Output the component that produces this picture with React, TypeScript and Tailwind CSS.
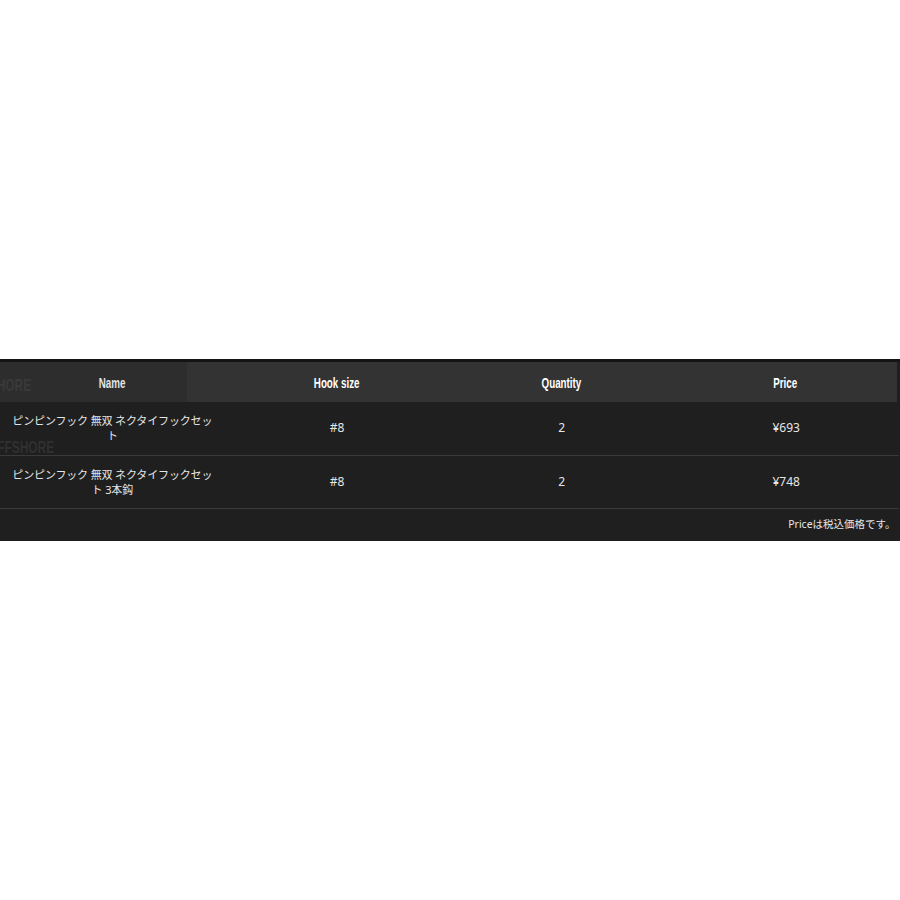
import React from "react";

const rows = [
  { name: "ピンピンフック 無双 ネクタイフックセット", hook: "#8", qty: "2", price: "¥693" },
  { name: "ピンピンフック 無双 ネクタイフックセット 3本鈎", hook: "#8", qty: "2", price: "¥748" },
];

const head = { fontFamily: '"Liberation Sans", Arial, sans-serif' };
const body = { fontFamily: '"Noto Sans", "Noto Sans CJK JP", sans-serif' };

// condensed header label (Oswald-like look)
const Label = ({ children }: { children: React.ReactNode }) => (
  <span className="inline-block scale-x-[0.7] text-[14px] font-bold" style={head}>
    {children}
  </span>
);

export default function App() {
  return (
    <div className="w-[900px] h-[900px] bg-white">
      <div className="h-[359px]" />
      <div className="relative w-full bg-[#1f1f1f] border-t-[3px] border-[#141414] overflow-hidden">
        <table className="w-full table-fixed border-collapse" style={body}>
          <thead>
            <tr className="h-[40px] text-white">
              <th className="w-1/4 bg-[#333333] font-bold">
                <Label>Name</Label>
              </th>
              <th className="w-1/4 bg-[#333333]">
                <Label>Hook size</Label>
              </th>
              <th className="w-1/4 bg-[#333333]">
                <Label>Quantity</Label>
              </th>
              <th className="w-1/4 bg-[#333333] border-r-[3px] border-[#1f1f1f]">
                <Label>Price</Label>
              </th>
            </tr>
          </thead>
          <tbody className="text-[12px] text-[#e6e6e6]">
            {rows.map((r) => (
              <tr key={r.price} className="h-[53px] border-b border-[#3a3a3a]">
                <td className="px-[10px] text-center text-[11px] tracking-[-0.15px] leading-[15px]">{r.name}</td>
                <td className="text-center">{r.hook}</td>
                <td className="text-center">{r.qty}</td>
                <td className="text-center">{r.price}</td>
              </tr>
            ))}
            <tr className="h-[33px]">
              <td colSpan={4} className="text-right pr-[3px] text-[10.5px] text-[#e6e6e6]">
                Priceは税込価格です。
              </td>
            </tr>
          </tbody>
        </table>
        <div className="absolute left-0 top-0 w-[187px] h-[40px] bg-black/10 pointer-events-none" />
        <div
          className="absolute left-[-35px] top-[11px] origin-left scale-x-[0.7] text-[17px] font-bold text-[#3a3a3a] whitespace-nowrap pointer-events-none"
          style={head}
        >
          OFFSHORE
        </div>
        <div
          className="absolute left-[-12px] top-[73px] origin-left scale-x-[0.7] text-[17px] font-bold text-[#303030] whitespace-nowrap pointer-events-none"
          style={head}
        >
          OFFSHORE
        </div>
      </div>
    </div>
  );
}
